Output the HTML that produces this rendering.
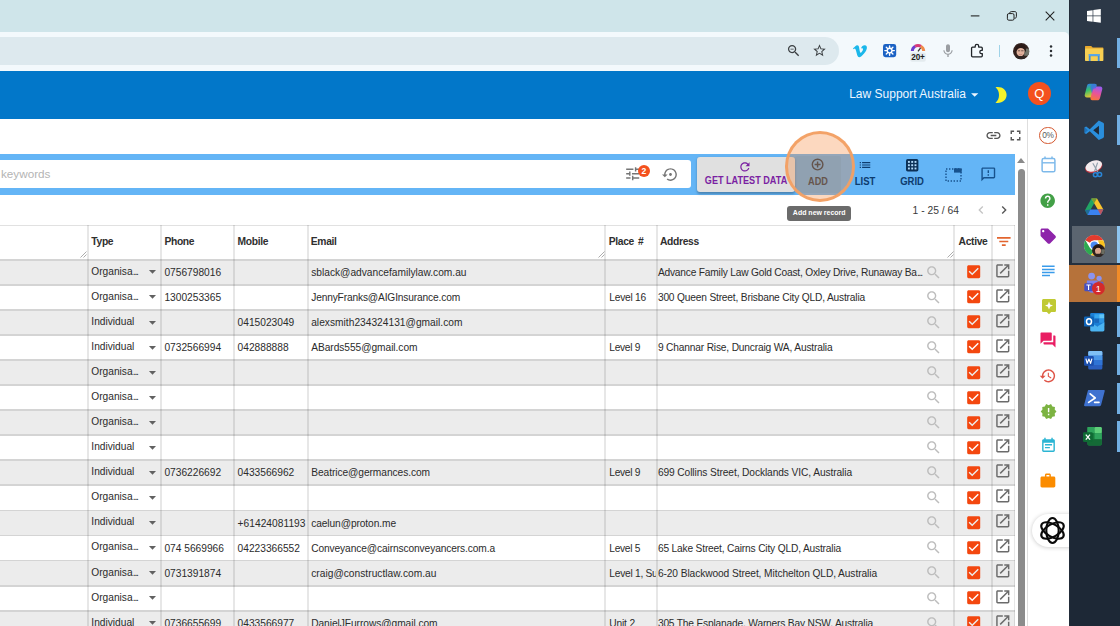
<!DOCTYPE html>
<html lang="en">
<head>
<meta charset="utf-8">
<title>Contacts</title>
<style>
*{box-sizing:border-box;margin:0;padding:0}
html,body{width:1120px;height:626px;overflow:hidden;background:#fff}
body{position:relative;font-family:"Liberation Sans",sans-serif;color:#333}
.abs{position:absolute}
.ic{position:absolute;display:block;overflow:visible}
/* chrome */
#tabstrip{left:0;top:0;width:1069px;height:45px;background:#cfe5ea}
#ctool{left:0;top:32.3px;width:1069px;height:39.2px;background:#f3f9fc;border-top-right-radius:5px}
#pill{left:-30px;top:37px;width:869px;height:28px;border-radius:14px;background:#dde9ee}
/* app header */
#hdr{left:0;top:71px;width:1069px;height:47.8px;background:#0277c9}
#org{left:849.2px;top:86.9px;font-size:12px;line-height:14px;color:#eef6ff;white-space:nowrap}
#avatar{left:1027.9px;top:82.4px;width:22.8px;height:22.8px;border-radius:50%;background:#f4511e;color:#fff;font-size:13px;line-height:23px;text-align:center}
/* toolbar band */
#band{left:0;top:154px;width:1015px;height:40.8px;background:#64b5f6}
#sinput{left:-6px;top:160px;width:696.6px;height:28.2px;background:#fff;border-radius:3px}
#kw{left:1.0px;top:167.3px;font-size:11.7px;line-height:14px;color:#b4b4b4;white-space:nowrap}
#badge{left:637.7px;top:164.8px;width:12.6px;height:12.6px;border-radius:50%;background:#f4511e;color:#fff;font-size:8.6px;font-weight:bold;line-height:12.6px;text-align:center}
#btnget{left:697px;top:156.6px;width:98px;height:35px;background:#e0e0e0;border-radius:3px;box-shadow:0 1.5px 2.5px rgba(0,0,0,.28)}
.blab{position:absolute;font-size:10px;font-weight:bold;line-height:12px;white-space:nowrap;text-align:center;transform:translateX(-50%) scaleX(.95)}
#btnadd{left:795.3px;top:155.6px;width:46px;height:37px;background:rgba(0,0,0,.045);border-radius:2px}
#hl{left:785px;top:131.3px;width:70px;height:70.4px;border-radius:50%;background:rgba(246,138,60,.33);border:3.2px solid rgba(243,160,100,.96)}
#tip{left:786.7px;top:206px;width:64.2px;height:15.2px;border-radius:3px;background:#6b6b6b;color:#fff;font-size:8px;font-weight:bold;line-height:14.6px;text-align:center;white-space:nowrap}
#tip span{display:inline-block;transform:scaleX(.872);transform-origin:50% 50%;margin:0 -8px}
#pg{left:912.6px;top:203.6px;font-size:10.3px;line-height:14px;color:#3a3a3a;white-space:nowrap}
/* table */
#thead{left:0;top:225px;width:1015px;height:34.3px;background:#fff;border-top:1.6px solid #e1e1e1}
.th{position:absolute;top:234.6px;font-size:10.3px;font-weight:bold;line-height:14px;color:#2f2f2f;white-space:nowrap;letter-spacing:-0.33px}
.row{position:absolute;left:0;width:1015px;height:25.1px}
.c{position:absolute;top:6.75px;font-size:10.2px;line-height:13px;color:#2b2b2b;white-space:nowrap}
.c.ty{top:5.2px}
.c.pl{width:46.6px;overflow:hidden}
.e{font-style:normal;letter-spacing:-1.2px;margin-left:0.2px}
.vs{position:absolute;top:225px;width:2px;height:401px;background:rgba(0,0,0,.095)}
.hs{position:absolute;left:0;width:1015px;height:1.8px;background:#d4d4d4}
.rz{position:absolute;top:250.5px;width:7px;height:7px}
/* scrollbar */
#sbthumb{left:1018px;top:168.5px;width:7.2px;height:470px;border-radius:3.6px;background:#8c8c8c}
#sbup{left:1016.6px;top:158.2px;width:0;height:0;border-left:4.5px solid transparent;border-right:4.5px solid transparent;border-bottom:5px solid #8a8a8a}
/* right app sidebar */
#sline{left:1027px;top:118.8px;width:1px;height:508px;background:#dedede}
#pct{left:1039.1px;top:126.7px;width:17.8px;height:17.8px;border-radius:50%;border:1.8px solid #d4562d;font-size:8.3px;line-height:14.4px;text-align:center;color:#5a5a5a;letter-spacing:-0.35px}
#fpill{left:1031.6px;top:513.6px;width:40px;height:33.8px;border-radius:17px 0 0 17px;background:#fff;box-shadow:0 0.5px 4px rgba(0,0,0,.22)}
/* taskbar */
#task{left:1069px;top:0;width:51px;height:626px;background:linear-gradient(to bottom,#2c3847 0,#2c3847 226px,#1d2836 302px,#1d2836 100%);border-left:1.5px solid #222c39}
.ind{position:absolute;left:1117.3px;width:2.7px;background:#72afe3}
#tchrome{left:1071.6px;top:226.2px;width:45.8px;height:37.2px;background:#5b6570}
#tteams{left:1069px;top:264.5px;width:48.3px;height:37px;background:#b6723a}
</style>
</head>
<body>
<!-- ===== Chrome window frame ===== -->
<div id="tabstrip" class="abs"></div>
<div id="ctool" class="abs"></div>
<div id="pill" class="abs"></div>
<!-- window controls -->
<svg class="ic" style="left:969px;top:10px;width:12px;height:12px" viewBox="0 0 12 12"><path d="M1.8 5.9H10.4" stroke="#222" stroke-width="1.1" fill="none"/></svg>
<svg class="ic" style="left:1006.4px;top:10.2px;width:12px;height:12px" viewBox="0 0 12 12"><rect x="1.4" y="3.6" width="6.6" height="6.6" rx="1.4" fill="none" stroke="#222" stroke-width="1"/><path d="M3.8 3.4V3.1c0-.9.6-1.5 1.5-1.5h3.6c.9 0 1.5.6 1.5 1.5v3.6c0 .9-.6 1.5-1.5 1.5h-.5" fill="none" stroke="#222" stroke-width="1"/></svg>
<svg class="ic" style="left:1044.1px;top:10.1px;width:12px;height:12px" viewBox="0 0 12 12"><path d="M1.7 1.7L10.3 10.3M10.3 1.7L1.7 10.3" stroke="#222" stroke-width="1.05" fill="none"/></svg>
<!-- zoom-out magnifier -->
<svg class="ic" style="left:785.6px;top:43.4px;width:15.4px;height:15.4px" viewBox="0 0 24 24"><path fill="#3c4043" d="M15.5 14h-.79l-.28-.27C15.41 12.59 16 11.11 16 9.5 16 5.91 13.09 3 9.5 3S3 5.91 3 9.5 5.91 16 9.5 16c1.61 0 3.09-.59 4.23-1.57l.27.28v.79l5 4.99L20.49 19l-4.99-5zm-6 0C7.01 14 5 11.99 5 9.5S7.01 5 9.5 5 14 7.01 14 9.5 11.99 14 9.5 14zM7 9h5v1H7z"/></svg>
<!-- star -->
<svg class="ic" style="left:812px;top:43.2px;width:15px;height:15px" viewBox="0 0 24 24"><path fill="#3c4043" d="M22 9.24l-7.19-.62L12 2 9.19 8.63 2 9.24l5.46 4.73L5.82 21 12 17.27 18.18 21l-1.63-7.03L22 9.24zM12 15.4l-3.76 2.27 1-4.28-3.32-2.880 4.380-.38L12 6.100l1.710 4.040 4.380.38-3.320 2.880 1 4.280L12 15.400z"/></svg>
<!-- vimeo v -->
<svg class="ic" style="left:853.4px;top:44.6px;width:14px;height:13px" viewBox="0 0 14 13"><path fill="#1ab7ea" d="M13.9 2.9c-.06 1.36-1.01 3.220-2.850 5.580C9.150 10.950 7.540 12.200 6.230 12.200c-.81 0-1.500-.75-2.060-2.250L3.040 5.810C2.620 4.310 2.170 3.560 1.690 3.560c-.1 0-.47.22-1.100.66L0 3.370c.69-.61 1.370-1.210 2.040-1.820C2.960.75 3.650.33 4.110.29 5.200.19 5.870.93 6.120 2.520c.27 1.720.46 2.790.56 3.210.31 1.420.66 2.130 1.030 2.130.29 0 .73-.46 1.310-1.380.58-.92.89-1.620.93-2.100.08-.79-.23-1.190-.93-1.190-.33 0-.67.08-1.020.23C8.680 1.200 9.980.12 11.880.18 13.290.22 13.960 1.130 13.900 2.900z"/></svg>
<!-- blue gear square -->
<svg class="ic" style="left:882.900px;top:44.400px;width:13.200px;height:13.200px" viewBox="0 0 14 14"><rect width="14" height="14" rx="2.600" fill="#1b62c4"/><path d="M7 2v10M2 7h10M3.500 3.500l7 7M3.500 10.500l7-7" stroke="#fff" stroke-width="1.500" stroke-linecap="round"/><circle cx="7" cy="7" r="3.200" fill="#fff"/><circle cx="7" cy="7" r="1.700" fill="#1b62c4"/></svg>
<!-- rainbow arc + 20+ -->
<svg class="ic" style="left:909.300px;top:41.600px;width:18px;height:21px" viewBox="0 0 18 21"><path d="M3.300 9A5.800 5.800 0 0 1 6.200 4.200" stroke="#6a3fd0" stroke-width="3" fill="none"/><path d="M6 4.300A5.800 5.800 0 0 1 12 4.300" stroke="#d83a78" stroke-width="3" fill="none"/><path d="M11.800 4.200A5.800 5.800 0 0 1 14.700 9" stroke="#ef8a4a" stroke-width="3" fill="none"/><path d="M9 9.400L11.600 5.800" stroke="#333" stroke-width="1.200"/><rect x="1.200" y="10.400" width="15.600" height="9.400" rx="2" fill="#e4ebee"/><text x="9" y="18.100" font-family="Liberation Sans, sans-serif" font-size="8.200" font-weight="bold" fill="#1c1c1c" text-anchor="middle" letter-spacing="-0.200">20+</text></svg>
<!-- mic -->
<svg class="ic" style="left:940.2px;top:43px;width:16px;height:16px" viewBox="0 0 24 24"><path fill="#9a9ea2" d="M12 14c1.660 0 2.990-1.340 2.990-3L15 5c0-1.660-1.340-3-3-3S9 3.340 9 5v6c0 1.660 1.340 3 3 3zm5.300-3c0 3-2.540 5.100-5.300 5.100S6.700 14 6.700 11H5c0 3.410 2.720 6.230 6 6.720V21h2v-3.280c3.280-.48 6-3.300 6-6.720h-1.700z"/></svg>
<!-- extensions puzzle -->
<svg class="ic" style="left:970.400px;top:42px;width:15.400px;height:16.300px" viewBox="0 0 16 17"><path d="M2.700 5.300h2.700v-1a1.800 1.800 0 0 1 3.600 0v1h2.700a1.100 1.100 0 0 1 1.100 1.100v2.300h-.9a1.700 1.700 0 0 0 0 3.400h.9v2.300a1.100 1.100 0 0 1-1.100 1.100H2.700a1.100 1.100 0 0 1-1.100-1.100V6.400a1.100 1.100 0 0 1 1.100-1.100z" fill="none" stroke="#202428" stroke-width="1.350" stroke-linejoin="round"/></svg>
<!-- separator -->
<div class="abs" style="left:998.9px;top:44.6px;width:1.3px;height:12.800px;background:#9fd3e8"></div>
<!-- profile avatar photo (approximation) -->
<svg class="ic" style="left:1013.400px;top:43px;width:16.400px;height:16.400px" viewBox="0 0 16 16"><defs><clipPath id="avc"><circle cx="8" cy="8" r="8"/></clipPath></defs><g clip-path="url(#avc)"><rect width="16" height="16" fill="#33221d"/><rect x="11" y="5.500" width="5" height="7" fill="#6f7368"/><ellipse cx="7.300" cy="8.300" rx="3.900" ry="4.800" fill="#e0b29c"/><path d="M2.300 10.500C1.500 4 4.600 1 8 1.200c3.600.2 5.400 3.200 4.500 8.400-.5-3-1.700-4.500-4.600-4.800C5.300 4.600 3.500 6.500 2.300 10.500z" fill="#2a1a16"/><path d="M4.700 7.600h2.300M8 7.600h2.300" stroke="#5a4138" stroke-width=".8"/><path d="M5.800 10.800c1 .8 2.200.8 3.200 0" stroke="#b5736a" stroke-width=".7" fill="none"/><path d="M1.500 16c.6-2.600 2.600-3.400 5.800-3.400s5.200.8 5.800 3.400z" fill="#2c2522"/></g></svg>
<!-- 3 dots -->
<svg class="ic" style="left:1046.6px;top:43.4px;width:8px;height:16px" viewBox="0 0 8 16"><circle cx="4" cy="3.500" r="1.250" fill="#2b2f33"/><circle cx="4" cy="8" r="1.250" fill="#2b2f33"/><circle cx="4" cy="12.500" r="1.250" fill="#2b2f33"/></svg>


<!-- ===== App header ===== -->
<div id="hdr" class="abs"></div>
<div id="org" class="abs">Law Support Australia</div>
<svg class="ic" style="left:966.4px;top:85.6px;width:17.4px;height:17.4px" viewBox="0 0 24 24"><path fill="#eef6ff" d="M7 10l5 5 5-5z"/></svg>
<svg class="ic" style="left:994.4px;top:86.5px;width:13px;height:16px" viewBox="0 0 13 16"><path fill="#f3f32a" d="M1.500.3C8-.8 12.600 3 12.600 8S8 16.800 1.500 15.700C4 13.600 5 11 5 8S4 2.400 1.500.3z"/></svg>
<div id="avatar" class="abs">Q</div>

<!-- ===== link / fullscreen ===== -->
<svg class="ic" style="left:985.3px;top:127.3px;width:17px;height:17px" viewBox="0 0 24 24"><path fill="#555" d="M3.9 12c0-1.71 1.39-3.1 3.1-3.1h4V7H7c-2.76 0-5 2.24-5 5s2.24 5 5 5h4v-1.9H7c-1.71 0-3.1-1.39-3.1-3.1zM8 13h8v-2H8v2zm9-6h-4v1.9h4c1.71 0 3.1 1.39 3.1 3.1s-1.39 3.1-3.1 3.1h-4V17h4c2.76 0 5-2.24 5-5s-2.24-5-5-5z"/></svg>
<svg class="ic" style="left:1007.1px;top:127.3px;width:17px;height:17px" viewBox="0 0 24 24"><path fill="#555" d="M7 14H5v5h5v-2H7v-3zm-2-4h2V7h3V5H5v5zm12 7h-3v2h5v-5h-2v3zM14 5v2h3v3h2V5h-5z"/></svg>

<!-- ===== Toolbar band ===== -->
<div id="band" class="abs"></div>
<div id="sinput" class="abs"></div>
<div id="kw" class="abs">keywords</div>
<svg class="ic" style="left:623.5px;top:165.3px;width:17.4px;height:17.4px" viewBox="0 0 24 24"><path fill="#757575" d="M3 17v2h6v-2H3zM3 5v2h10V5H3zm10 16v-2h8v-2h-8v-2h-2v6h2zM7 9v2H3v2h4v2h2V9H7zm14 4v-2H11v2h10zm-6-4h2V7h4V5h-4V3h-2v6z"/></svg>
<div id="badge" class="abs">2</div>
<svg class="ic" style="left:661.7px;top:165.7px;width:17px;height:17px" viewBox="0 0 24 24"><path fill="#757575" d="M14 12c0-1.1-.9-2-2-2s-2 .9-2 2 .9 2 2 2 2-.9 2-2zm-2-9c-4.970 0-9 4.030-9 9H0l4 4 4-4H5c0-3.870 3.130-7 7-7s7 3.130 7 7-3.130 7-7 7c-1.510 0-2.910-.49-4.060-1.300l-1.420 1.440C8.040 20.300 9.940 21 12 21c4.970 0 9-4.030 9-9s-4.030-9-9-9z"/></svg>

<div id="btnget" class="abs"></div>
<svg class="ic" style="left:737.9px;top:159.7px;width:13.8px;height:13.8px" viewBox="0 0 24 24"><path fill="#7b1fa2" d="M17.65 6.35C16.2 4.9 14.21 4 12 4c-4.42 0-7.99 3.58-7.99 8s3.57 8 7.990 8c3.730 0 6.840-2.550 7.730-6h-2.080c-.82 2.330-3.040 4-5.650 4-3.310 0-6-2.690-6-6s2.690-6 6-6c1.660 0 3.140.69 4.220 1.780L13 11h7V4l-2.350 2.350z"/></svg>
<div class="blab" style="left:745.8px;top:175.2px;color:#7b1fa2;transform:translateX(-50%) scaleX(.91)">GET LATEST DATA</div>

<div id="btnadd" class="abs"></div>
<svg class="ic" style="left:811.2px;top:158.4px;width:13.2px;height:13.2px" viewBox="0 0 13.200 13.200"><circle cx="6.600" cy="6.600" r="5.300" fill="none" stroke="#1e3c55" stroke-width="1.450"/><path d="M6.600 3.600V9.600M3.600 6.600H9.600" stroke="#1e3c55" stroke-width="1.450" fill="none"/></svg>
<div class="blab" style="left:818.3px;top:175.6px;color:#1e3c55;transform:translateX(-50%) scaleX(.92)">ADD</div>

<svg class="ic" style="left:857.9px;top:158.3px;width:14px;height:14px" viewBox="0 0 24 24"><path fill="#0d3c6e" d="M3 13h2v-2H3v2zm0 4h2v-2H3v2zm0-8h2V7H3v2zm4 4h14v-2H7v2zm0 4h14v-2H7v2zM7 7v2h14V7H7z"/></svg>
<div class="blab" style="left:865.1px;top:175.9px;color:#0d3c6e">LIST</div>

<svg class="ic" style="left:906.1px;top:158.9px;width:12.4px;height:12.4px" viewBox="0 0 12.400 12.400"><rect width="12.400" height="12.400" rx="1.700" fill="#0c3157"/><g fill="#b3dbfa"><rect x="1.95" y="1.95" width="1.900" height="1.900"/><rect x="5.25" y="1.95" width="1.900" height="1.900"/><rect x="8.55" y="1.95" width="1.900" height="1.900"/><rect x="1.95" y="5.25" width="1.900" height="1.900"/><rect x="5.25" y="5.25" width="1.900" height="1.900"/><rect x="8.55" y="5.25" width="1.900" height="1.900"/><rect x="1.95" y="8.55" width="1.900" height="1.900"/><rect x="5.25" y="8.55" width="1.900" height="1.900"/><rect x="8.55" y="8.55" width="1.900" height="1.900"/></g></svg>
<div class="blab" style="left:912.1px;top:175.9px;color:#0d3c6e">GRID</div>

<!-- pivot icon -->
<svg class="ic" style="left:944.9px;top:167.6px;width:17px;height:14px" viewBox="0 0 17 14"><rect x="1" y="1" width="15" height="12" fill="none" stroke="#17528d" stroke-width="1.4" stroke-dasharray="1.4 1.6"/><rect x="9" y="0.300" width="7.700" height="4.300" fill="#17528d"/></svg>
<!-- feedback icon -->
<svg class="ic" style="left:979.7px;top:165.6px;width:16.6px;height:16.6px" viewBox="0 0 24 24"><path fill="#17528d" d="M20 2H4c-1.100 0-1.990.9-1.990 2L2 22l4-4h14c1.100 0 2-.9 2-2V4c0-1.100-.9-2-2-2zm0 14H5.170l-.59.59-.58.58V4h16v12zm-9-4h2v2h-2zm0-6h2v4h-2z"/></svg>

<!-- ===== pagination ===== -->
<div id="pg" class="abs">1 - 25 / 64</div>
<svg class="ic" style="left:973.2px;top:202.3px;width:16px;height:16px" viewBox="0 0 24 24"><path fill="#c4c4c4" d="M15.41 7.41L14 6l-6 6 6 6 1.41-1.41L10.83 12z"/></svg>
<svg class="ic" style="left:995.9px;top:202.3px;width:16px;height:16px" viewBox="0 0 24 24"><path fill="#555" d="M10 6L8.590 7.410 13.170 12l-4.580 4.590L10 18l6-6z"/></svg>

<!-- ===== table ===== -->
<div id="thead" class="abs"></div>
<div class="th" style="left:91.3px">Type</div>
<div class="th" style="left:164.4px">Phone</div>
<div class="th" style="left:237.5px">Mobile</div>
<div class="th" style="left:310.8px">Email</div>
<div class="th" style="left:608.7px;word-spacing:1.6px">Place #</div>
<div class="th" style="left:660px">Address</div>
<div class="th" style="left:958.6px">Active</div>
<svg class="ic" style="left:996.6px;top:235.600px;width:13.600px;height:11px" viewBox="0 0 13.600 11"><path d="M0 1.900H13.600M2.300 5.500H11.300M4.900 9.100H8.700" stroke="#e2652f" stroke-width="1.700" fill="none"/></svg>
<div class="row" style="top:259.70px;background:#ececec">
<span class="c ty" style="left:91.3px;top:5.30px">Organisa<i class=e>...</i></span>
<span class="c" style="left:164.4px;top:6.30px">0756798016</span>
<span class="c" style="left:311.2px;top:6.30px">sblack@advancefamilylaw.com.au</span>
<span class="c" style="left:657.9px;top:6.30px;letter-spacing:-0.197px">Advance Family Law Gold Coast, Oxley Drive, Runaway Ba<i class=e>...</i></span>
</div>
<svg class="ic" style="left:144.00px;top:263.38px;width:17px;height:17px;" viewBox="0 0 24 24"><path fill="#616161" d="M7 10l5 5 5-5z"/></svg>
<svg class="ic" style="left:924.70px;top:263.63px;width:17px;height:17px;" viewBox="0 0 24 24"><path fill="#bdbdbd" d="M15.5 14h-.79l-.28-.27C15.41 12.59 16 11.11 16 9.5 16 5.91 13.09 3 9.5 3S3 5.91 3 9.5 5.91 16 9.5 16c1.61 0 3.09-.59 4.23-1.57l.27.28v.79l5 4.99L20.49 19l-4.99-5zm-6 0C7.01 14 5 11.99 5 9.5S7.01 5 9.5 5 14 7.01 14 9.5 11.99 14 9.5 14z"/></svg>
<svg class="ic" style="left:964.80px;top:263.24px;width:17.4px;height:17.4px;" viewBox="0 0 24 24"><path fill="#f3470f" d="M19 3H5c-1.11 0-2 .9-2 2v14c0 1.1.89 2 2 2h14c1.11 0 2-.9 2-2V5c0-1.1-.89-2-2-2zm-9 14l-5-5 1.41-1.41L10 14.17l7.59-7.59L19 8l-9 9z"/></svg>
<svg class="ic" style="left:993.90px;top:261.63px;width:17.6px;height:17.6px;" viewBox="0 0 24 24"><path fill="#6b6b6b" d="M19 19H5V5h7V3H5c-1.11 0-2 .9-2 2v14c0 1.1.89 2 2 2h14c1.1 0 2-.9 2-2v-7h-2v7zM14 3v2h3.59l-9.83 9.83 1.41 1.41L19 6.41V10h2V3h-7z"/></svg>
<div class="row" style="top:284.77px;background:#ffffff">
<span class="c ty" style="left:91.3px;top:5.23px">Organisa<i class=e>...</i></span>
<span class="c" style="left:164.4px;top:6.23px">1300253365</span>
<span class="c" style="left:311.2px;top:6.23px;letter-spacing:-0.151px">JennyFranks@AIGInsurance.com</span>
<span class="c pl" style="left:609.3px;top:6.23px;letter-spacing:-0.229px">Level 16</span>
<span class="c" style="left:657.9px;top:6.23px;letter-spacing:-0.176px">300 Queen Street, Brisbane City QLD, Australia</span>
</div>
<svg class="ic" style="left:144.00px;top:288.45px;width:17px;height:17px;" viewBox="0 0 24 24"><path fill="#616161" d="M7 10l5 5 5-5z"/></svg>
<svg class="ic" style="left:924.70px;top:288.70px;width:17px;height:17px;" viewBox="0 0 24 24"><path fill="#bdbdbd" d="M15.5 14h-.79l-.28-.27C15.41 12.59 16 11.11 16 9.5 16 5.91 13.09 3 9.5 3S3 5.91 3 9.5 5.91 16 9.5 16c1.61 0 3.09-.59 4.23-1.57l.27.28v.79l5 4.99L20.49 19l-4.99-5zm-6 0C7.01 14 5 11.99 5 9.5S7.01 5 9.5 5 14 7.01 14 9.5 11.99 14 9.5 14z"/></svg>
<svg class="ic" style="left:964.80px;top:288.31px;width:17.4px;height:17.4px;" viewBox="0 0 24 24"><path fill="#f3470f" d="M19 3H5c-1.11 0-2 .9-2 2v14c0 1.1.89 2 2 2h14c1.11 0 2-.9 2-2V5c0-1.1-.89-2-2-2zm-9 14l-5-5 1.41-1.41L10 14.17l7.59-7.59L19 8l-9 9z"/></svg>
<svg class="ic" style="left:993.90px;top:286.70px;width:17.6px;height:17.6px;" viewBox="0 0 24 24"><path fill="#6b6b6b" d="M19 19H5V5h7V3H5c-1.11 0-2 .9-2 2v14c0 1.1.89 2 2 2h14c1.1 0 2-.9 2-2v-7h-2v7zM14 3v2h3.59l-9.83 9.83 1.41 1.41L19 6.41V10h2V3h-7z"/></svg>
<div class="row" style="top:309.84px;background:#ececec">
<span class="c ty" style="left:91.3px;top:5.16px">Individual</span>
<span class="c" style="left:237.6px;top:6.16px">0415023049</span>
<span class="c" style="left:311.2px;top:6.16px;letter-spacing:0.018px">alexsmith234324131@gmail.com</span>
</div>
<svg class="ic" style="left:144.00px;top:313.52px;width:17px;height:17px;" viewBox="0 0 24 24"><path fill="#616161" d="M7 10l5 5 5-5z"/></svg>
<svg class="ic" style="left:924.70px;top:313.77px;width:17px;height:17px;" viewBox="0 0 24 24"><path fill="#bdbdbd" d="M15.5 14h-.79l-.28-.27C15.41 12.59 16 11.11 16 9.5 16 5.91 13.09 3 9.5 3S3 5.91 3 9.5 5.91 16 9.5 16c1.61 0 3.09-.59 4.23-1.57l.27.28v.79l5 4.99L20.49 19l-4.99-5zm-6 0C7.01 14 5 11.99 5 9.5S7.01 5 9.5 5 14 7.01 14 9.5 11.99 14 9.5 14z"/></svg>
<svg class="ic" style="left:964.80px;top:313.38px;width:17.4px;height:17.4px;" viewBox="0 0 24 24"><path fill="#f3470f" d="M19 3H5c-1.11 0-2 .9-2 2v14c0 1.1.89 2 2 2h14c1.11 0 2-.9 2-2V5c0-1.1-.89-2-2-2zm-9 14l-5-5 1.41-1.41L10 14.17l7.59-7.59L19 8l-9 9z"/></svg>
<svg class="ic" style="left:993.90px;top:311.77px;width:17.6px;height:17.6px;" viewBox="0 0 24 24"><path fill="#6b6b6b" d="M19 19H5V5h7V3H5c-1.11 0-2 .9-2 2v14c0 1.1.89 2 2 2h14c1.1 0 2-.9 2-2v-7h-2v7zM14 3v2h3.59l-9.83 9.83 1.41 1.41L19 6.41V10h2V3h-7z"/></svg>
<div class="row" style="top:334.91px;background:#ffffff">
<span class="c ty" style="left:91.3px;top:5.09px">Individual</span>
<span class="c" style="left:164.4px;top:6.09px">0732566994</span>
<span class="c" style="left:237.6px;top:6.09px">042888888</span>
<span class="c" style="left:311.2px;top:6.09px;letter-spacing:-0.046px">ABards555@gmail.com</span>
<span class="c pl" style="left:609.3px;top:6.09px;letter-spacing:-0.308px">Level 9</span>
<span class="c" style="left:657.9px;top:6.09px;letter-spacing:-0.166px">9 Channar Rise, Duncraig WA, Australia</span>
</div>
<svg class="ic" style="left:144.00px;top:338.59px;width:17px;height:17px;" viewBox="0 0 24 24"><path fill="#616161" d="M7 10l5 5 5-5z"/></svg>
<svg class="ic" style="left:924.70px;top:338.84px;width:17px;height:17px;" viewBox="0 0 24 24"><path fill="#bdbdbd" d="M15.5 14h-.79l-.28-.27C15.41 12.59 16 11.11 16 9.5 16 5.91 13.09 3 9.5 3S3 5.91 3 9.5 5.91 16 9.5 16c1.61 0 3.09-.59 4.23-1.57l.27.28v.79l5 4.99L20.49 19l-4.99-5zm-6 0C7.01 14 5 11.99 5 9.5S7.01 5 9.5 5 14 7.01 14 9.5 11.99 14 9.5 14z"/></svg>
<svg class="ic" style="left:964.80px;top:338.44px;width:17.4px;height:17.4px;" viewBox="0 0 24 24"><path fill="#f3470f" d="M19 3H5c-1.11 0-2 .9-2 2v14c0 1.1.89 2 2 2h14c1.11 0 2-.9 2-2V5c0-1.1-.89-2-2-2zm-9 14l-5-5 1.41-1.41L10 14.17l7.59-7.59L19 8l-9 9z"/></svg>
<svg class="ic" style="left:993.90px;top:336.84px;width:17.6px;height:17.6px;" viewBox="0 0 24 24"><path fill="#6b6b6b" d="M19 19H5V5h7V3H5c-1.11 0-2 .9-2 2v14c0 1.1.89 2 2 2h14c1.1 0 2-.9 2-2v-7h-2v7zM14 3v2h3.59l-9.83 9.83 1.41 1.41L19 6.41V10h2V3h-7z"/></svg>
<div class="row" style="top:359.98px;background:#ececec">
<span class="c ty" style="left:91.3px;top:5.02px">Organisa<i class=e>...</i></span>
</div>
<svg class="ic" style="left:144.00px;top:363.67px;width:17px;height:17px;" viewBox="0 0 24 24"><path fill="#616161" d="M7 10l5 5 5-5z"/></svg>
<svg class="ic" style="left:924.70px;top:363.92px;width:17px;height:17px;" viewBox="0 0 24 24"><path fill="#bdbdbd" d="M15.5 14h-.79l-.28-.27C15.41 12.59 16 11.11 16 9.5 16 5.91 13.09 3 9.5 3S3 5.91 3 9.5 5.91 16 9.5 16c1.61 0 3.09-.59 4.23-1.57l.27.28v.79l5 4.99L20.49 19l-4.99-5zm-6 0C7.01 14 5 11.99 5 9.5S7.01 5 9.5 5 14 7.01 14 9.5 11.99 14 9.5 14z"/></svg>
<svg class="ic" style="left:964.80px;top:363.52px;width:17.4px;height:17.4px;" viewBox="0 0 24 24"><path fill="#f3470f" d="M19 3H5c-1.11 0-2 .9-2 2v14c0 1.1.89 2 2 2h14c1.11 0 2-.9 2-2V5c0-1.1-.89-2-2-2zm-9 14l-5-5 1.41-1.41L10 14.17l7.59-7.59L19 8l-9 9z"/></svg>
<svg class="ic" style="left:993.90px;top:361.92px;width:17.6px;height:17.6px;" viewBox="0 0 24 24"><path fill="#6b6b6b" d="M19 19H5V5h7V3H5c-1.11 0-2 .9-2 2v14c0 1.1.89 2 2 2h14c1.1 0 2-.9 2-2v-7h-2v7zM14 3v2h3.59l-9.83 9.83 1.41 1.41L19 6.41V10h2V3h-7z"/></svg>
<div class="row" style="top:385.05px;background:#ffffff">
<span class="c ty" style="left:91.3px;top:4.95px">Organisa<i class=e>...</i></span>
</div>
<svg class="ic" style="left:144.00px;top:388.73px;width:17px;height:17px;" viewBox="0 0 24 24"><path fill="#616161" d="M7 10l5 5 5-5z"/></svg>
<svg class="ic" style="left:924.70px;top:388.98px;width:17px;height:17px;" viewBox="0 0 24 24"><path fill="#bdbdbd" d="M15.5 14h-.79l-.28-.27C15.41 12.59 16 11.11 16 9.5 16 5.91 13.09 3 9.5 3S3 5.91 3 9.5 5.91 16 9.5 16c1.61 0 3.09-.59 4.23-1.57l.27.28v.79l5 4.99L20.49 19l-4.99-5zm-6 0C7.01 14 5 11.99 5 9.5S7.01 5 9.5 5 14 7.01 14 9.5 11.99 14 9.5 14z"/></svg>
<svg class="ic" style="left:964.80px;top:388.58px;width:17.4px;height:17.4px;" viewBox="0 0 24 24"><path fill="#f3470f" d="M19 3H5c-1.11 0-2 .9-2 2v14c0 1.1.89 2 2 2h14c1.11 0 2-.9 2-2V5c0-1.1-.89-2-2-2zm-9 14l-5-5 1.41-1.41L10 14.17l7.59-7.59L19 8l-9 9z"/></svg>
<svg class="ic" style="left:993.90px;top:386.98px;width:17.6px;height:17.6px;" viewBox="0 0 24 24"><path fill="#6b6b6b" d="M19 19H5V5h7V3H5c-1.11 0-2 .9-2 2v14c0 1.1.89 2 2 2h14c1.1 0 2-.9 2-2v-7h-2v7zM14 3v2h3.59l-9.83 9.83 1.41 1.41L19 6.41V10h2V3h-7z"/></svg>
<div class="row" style="top:410.12px;background:#ececec">
<span class="c ty" style="left:91.3px;top:4.88px">Organisa<i class=e>...</i></span>
</div>
<svg class="ic" style="left:144.00px;top:413.81px;width:17px;height:17px;" viewBox="0 0 24 24"><path fill="#616161" d="M7 10l5 5 5-5z"/></svg>
<svg class="ic" style="left:924.70px;top:414.06px;width:17px;height:17px;" viewBox="0 0 24 24"><path fill="#bdbdbd" d="M15.5 14h-.79l-.28-.27C15.41 12.59 16 11.11 16 9.5 16 5.91 13.09 3 9.5 3S3 5.91 3 9.5 5.91 16 9.5 16c1.61 0 3.09-.59 4.23-1.57l.27.28v.79l5 4.99L20.49 19l-4.99-5zm-6 0C7.01 14 5 11.99 5 9.5S7.01 5 9.5 5 14 7.01 14 9.5 11.99 14 9.5 14z"/></svg>
<svg class="ic" style="left:964.80px;top:413.66px;width:17.4px;height:17.4px;" viewBox="0 0 24 24"><path fill="#f3470f" d="M19 3H5c-1.11 0-2 .9-2 2v14c0 1.1.89 2 2 2h14c1.11 0 2-.9 2-2V5c0-1.1-.89-2-2-2zm-9 14l-5-5 1.41-1.41L10 14.17l7.59-7.59L19 8l-9 9z"/></svg>
<svg class="ic" style="left:993.90px;top:412.06px;width:17.6px;height:17.6px;" viewBox="0 0 24 24"><path fill="#6b6b6b" d="M19 19H5V5h7V3H5c-1.11 0-2 .9-2 2v14c0 1.1.89 2 2 2h14c1.1 0 2-.9 2-2v-7h-2v7zM14 3v2h3.59l-9.83 9.83 1.41 1.41L19 6.41V10h2V3h-7z"/></svg>
<div class="row" style="top:435.19px;background:#ffffff">
<span class="c ty" style="left:91.3px;top:4.81px">Individual</span>
</div>
<svg class="ic" style="left:144.00px;top:438.88px;width:17px;height:17px;" viewBox="0 0 24 24"><path fill="#616161" d="M7 10l5 5 5-5z"/></svg>
<svg class="ic" style="left:924.70px;top:439.12px;width:17px;height:17px;" viewBox="0 0 24 24"><path fill="#bdbdbd" d="M15.5 14h-.79l-.28-.27C15.41 12.59 16 11.11 16 9.5 16 5.91 13.09 3 9.5 3S3 5.91 3 9.5 5.91 16 9.5 16c1.61 0 3.09-.59 4.23-1.57l.27.28v.79l5 4.99L20.49 19l-4.99-5zm-6 0C7.01 14 5 11.99 5 9.5S7.01 5 9.5 5 14 7.01 14 9.5 11.99 14 9.5 14z"/></svg>
<svg class="ic" style="left:964.80px;top:438.73px;width:17.4px;height:17.4px;" viewBox="0 0 24 24"><path fill="#f3470f" d="M19 3H5c-1.11 0-2 .9-2 2v14c0 1.1.89 2 2 2h14c1.11 0 2-.9 2-2V5c0-1.1-.89-2-2-2zm-9 14l-5-5 1.41-1.41L10 14.17l7.59-7.59L19 8l-9 9z"/></svg>
<svg class="ic" style="left:993.90px;top:437.12px;width:17.6px;height:17.6px;" viewBox="0 0 24 24"><path fill="#6b6b6b" d="M19 19H5V5h7V3H5c-1.11 0-2 .9-2 2v14c0 1.1.89 2 2 2h14c1.1 0 2-.9 2-2v-7h-2v7zM14 3v2h3.59l-9.83 9.83 1.41 1.41L19 6.41V10h2V3h-7z"/></svg>
<div class="row" style="top:460.26px;background:#ececec">
<span class="c ty" style="left:91.3px;top:4.74px">Individual</span>
<span class="c" style="left:164.4px;top:5.74px">0736226692</span>
<span class="c" style="left:237.6px;top:5.74px">0433566962</span>
<span class="c" style="left:311.2px;top:5.74px;letter-spacing:-0.063px">Beatrice@germances.com</span>
<span class="c pl" style="left:609.3px;top:5.74px;letter-spacing:-0.308px">Level 9</span>
<span class="c" style="left:657.9px;top:5.74px;letter-spacing:-0.093px">699 Collins Street, Docklands VIC, Australia</span>
</div>
<svg class="ic" style="left:144.00px;top:463.94px;width:17px;height:17px;" viewBox="0 0 24 24"><path fill="#616161" d="M7 10l5 5 5-5z"/></svg>
<svg class="ic" style="left:924.70px;top:464.19px;width:17px;height:17px;" viewBox="0 0 24 24"><path fill="#bdbdbd" d="M15.5 14h-.79l-.28-.27C15.41 12.59 16 11.11 16 9.5 16 5.91 13.09 3 9.5 3S3 5.91 3 9.5 5.91 16 9.5 16c1.61 0 3.09-.59 4.23-1.57l.27.28v.79l5 4.99L20.49 19l-4.99-5zm-6 0C7.01 14 5 11.99 5 9.5S7.01 5 9.5 5 14 7.01 14 9.5 11.99 14 9.5 14z"/></svg>
<svg class="ic" style="left:964.80px;top:463.80px;width:17.4px;height:17.4px;" viewBox="0 0 24 24"><path fill="#f3470f" d="M19 3H5c-1.11 0-2 .9-2 2v14c0 1.1.89 2 2 2h14c1.11 0 2-.9 2-2V5c0-1.1-.89-2-2-2zm-9 14l-5-5 1.41-1.41L10 14.17l7.59-7.59L19 8l-9 9z"/></svg>
<svg class="ic" style="left:993.90px;top:462.19px;width:17.6px;height:17.6px;" viewBox="0 0 24 24"><path fill="#6b6b6b" d="M19 19H5V5h7V3H5c-1.11 0-2 .9-2 2v14c0 1.1.89 2 2 2h14c1.1 0 2-.9 2-2v-7h-2v7zM14 3v2h3.59l-9.83 9.83 1.41 1.41L19 6.41V10h2V3h-7z"/></svg>
<div class="row" style="top:485.33px;background:#ffffff">
<span class="c ty" style="left:91.3px;top:4.67px">Organisa<i class=e>...</i></span>
</div>
<svg class="ic" style="left:144.00px;top:489.01px;width:17px;height:17px;" viewBox="0 0 24 24"><path fill="#616161" d="M7 10l5 5 5-5z"/></svg>
<svg class="ic" style="left:924.70px;top:489.26px;width:17px;height:17px;" viewBox="0 0 24 24"><path fill="#bdbdbd" d="M15.5 14h-.79l-.28-.27C15.41 12.59 16 11.11 16 9.5 16 5.91 13.09 3 9.5 3S3 5.91 3 9.5 5.91 16 9.5 16c1.61 0 3.09-.59 4.23-1.57l.27.28v.79l5 4.99L20.49 19l-4.99-5zm-6 0C7.01 14 5 11.99 5 9.5S7.01 5 9.5 5 14 7.01 14 9.5 11.99 14 9.5 14z"/></svg>
<svg class="ic" style="left:964.80px;top:488.87px;width:17.4px;height:17.4px;" viewBox="0 0 24 24"><path fill="#f3470f" d="M19 3H5c-1.11 0-2 .9-2 2v14c0 1.1.89 2 2 2h14c1.11 0 2-.9 2-2V5c0-1.1-.89-2-2-2zm-9 14l-5-5 1.41-1.41L10 14.17l7.59-7.59L19 8l-9 9z"/></svg>
<svg class="ic" style="left:993.90px;top:487.26px;width:17.6px;height:17.6px;" viewBox="0 0 24 24"><path fill="#6b6b6b" d="M19 19H5V5h7V3H5c-1.11 0-2 .9-2 2v14c0 1.1.89 2 2 2h14c1.1 0 2-.9 2-2v-7h-2v7zM14 3v2h3.59l-9.83 9.83 1.41 1.41L19 6.41V10h2V3h-7z"/></svg>
<div class="row" style="top:510.40px;background:#ececec">
<span class="c ty" style="left:91.3px;top:4.60px">Individual</span>
<span class="c" style="left:237.6px;top:6.60px;letter-spacing:0.031px">+61424081193</span>
<span class="c" style="left:311.2px;top:6.60px;letter-spacing:-0.09px">caelun@proton.me</span>
</div>
<svg class="ic" style="left:144.00px;top:514.09px;width:17px;height:17px;" viewBox="0 0 24 24"><path fill="#616161" d="M7 10l5 5 5-5z"/></svg>
<svg class="ic" style="left:924.70px;top:514.34px;width:17px;height:17px;" viewBox="0 0 24 24"><path fill="#bdbdbd" d="M15.5 14h-.79l-.28-.27C15.41 12.59 16 11.11 16 9.5 16 5.91 13.09 3 9.5 3S3 5.91 3 9.5 5.91 16 9.5 16c1.61 0 3.09-.59 4.23-1.57l.27.28v.79l5 4.99L20.49 19l-4.99-5zm-6 0C7.01 14 5 11.99 5 9.5S7.01 5 9.5 5 14 7.01 14 9.5 11.99 14 9.5 14z"/></svg>
<svg class="ic" style="left:964.80px;top:513.93px;width:17.4px;height:17.4px;" viewBox="0 0 24 24"><path fill="#f3470f" d="M19 3H5c-1.11 0-2 .9-2 2v14c0 1.1.89 2 2 2h14c1.11 0 2-.9 2-2V5c0-1.1-.89-2-2-2zm-9 14l-5-5 1.41-1.41L10 14.17l7.59-7.59L19 8l-9 9z"/></svg>
<svg class="ic" style="left:993.90px;top:512.34px;width:17.6px;height:17.6px;" viewBox="0 0 24 24"><path fill="#6b6b6b" d="M19 19H5V5h7V3H5c-1.11 0-2 .9-2 2v14c0 1.1.89 2 2 2h14c1.1 0 2-.9 2-2v-7h-2v7zM14 3v2h3.59l-9.83 9.83 1.41 1.41L19 6.41V10h2V3h-7z"/></svg>
<div class="row" style="top:535.47px;background:#ffffff">
<span class="c ty" style="left:91.3px;top:4.53px">Organisa<i class=e>...</i></span>
<span class="c" style="left:164.4px;top:6.53px">074 5669966</span>
<span class="c" style="left:237.6px;top:6.53px">04223366552</span>
<span class="c" style="left:311.2px;top:6.53px;letter-spacing:-0.108px">Conveyance@cairnsconveyancers.com.a</span>
<span class="c pl" style="left:609.3px;top:6.53px;letter-spacing:-0.308px">Level 5</span>
<span class="c" style="left:657.9px;top:6.53px;letter-spacing:-0.17px">65 Lake Street, Cairns City QLD, Australia</span>
</div>
<svg class="ic" style="left:144.00px;top:539.16px;width:17px;height:17px;" viewBox="0 0 24 24"><path fill="#616161" d="M7 10l5 5 5-5z"/></svg>
<svg class="ic" style="left:924.70px;top:539.41px;width:17px;height:17px;" viewBox="0 0 24 24"><path fill="#bdbdbd" d="M15.5 14h-.79l-.28-.27C15.41 12.59 16 11.11 16 9.5 16 5.91 13.09 3 9.5 3S3 5.91 3 9.5 5.91 16 9.5 16c1.61 0 3.09-.59 4.23-1.57l.27.28v.79l5 4.99L20.49 19l-4.99-5zm-6 0C7.01 14 5 11.99 5 9.5S7.01 5 9.5 5 14 7.01 14 9.5 11.99 14 9.5 14z"/></svg>
<svg class="ic" style="left:964.80px;top:539.00px;width:17.4px;height:17.4px;" viewBox="0 0 24 24"><path fill="#f3470f" d="M19 3H5c-1.11 0-2 .9-2 2v14c0 1.1.89 2 2 2h14c1.11 0 2-.9 2-2V5c0-1.1-.89-2-2-2zm-9 14l-5-5 1.41-1.41L10 14.17l7.59-7.59L19 8l-9 9z"/></svg>
<svg class="ic" style="left:993.90px;top:537.41px;width:17.6px;height:17.6px;" viewBox="0 0 24 24"><path fill="#6b6b6b" d="M19 19H5V5h7V3H5c-1.11 0-2 .9-2 2v14c0 1.1.89 2 2 2h14c1.1 0 2-.9 2-2v-7h-2v7zM14 3v2h3.59l-9.83 9.83 1.41 1.41L19 6.41V10h2V3h-7z"/></svg>
<div class="row" style="top:560.54px;background:#ececec">
<span class="c ty" style="left:91.3px;top:5.46px">Organisa<i class=e>...</i></span>
<span class="c" style="left:164.4px;top:6.46px">0731391874</span>
<span class="c" style="left:311.2px;top:6.46px;letter-spacing:0.023px">craig@constructlaw.com.au</span>
<span class="c pl" style="left:609.3px;top:6.46px;letter-spacing:-0.25px">Level 1, Su</span>
<span class="c" style="left:657.9px;top:6.46px;letter-spacing:-0.084px">6-20 Blackwood Street, Mitchelton QLD, Australia</span>
</div>
<svg class="ic" style="left:144.00px;top:564.23px;width:17px;height:17px;" viewBox="0 0 24 24"><path fill="#616161" d="M7 10l5 5 5-5z"/></svg>
<svg class="ic" style="left:924.70px;top:564.48px;width:17px;height:17px;" viewBox="0 0 24 24"><path fill="#bdbdbd" d="M15.5 14h-.79l-.28-.27C15.41 12.59 16 11.11 16 9.5 16 5.91 13.09 3 9.5 3S3 5.91 3 9.5 5.91 16 9.5 16c1.61 0 3.09-.59 4.23-1.57l.27.28v.79l5 4.99L20.49 19l-4.99-5zm-6 0C7.01 14 5 11.99 5 9.5S7.01 5 9.5 5 14 7.01 14 9.5 11.99 14 9.5 14z"/></svg>
<svg class="ic" style="left:964.80px;top:564.07px;width:17.4px;height:17.4px;" viewBox="0 0 24 24"><path fill="#f3470f" d="M19 3H5c-1.11 0-2 .9-2 2v14c0 1.1.89 2 2 2h14c1.11 0 2-.9 2-2V5c0-1.1-.89-2-2-2zm-9 14l-5-5 1.41-1.41L10 14.17l7.59-7.59L19 8l-9 9z"/></svg>
<svg class="ic" style="left:993.90px;top:562.48px;width:17.6px;height:17.6px;" viewBox="0 0 24 24"><path fill="#6b6b6b" d="M19 19H5V5h7V3H5c-1.11 0-2 .9-2 2v14c0 1.1.89 2 2 2h14c1.1 0 2-.9 2-2v-7h-2v7zM14 3v2h3.59l-9.83 9.83 1.41 1.41L19 6.41V10h2V3h-7z"/></svg>
<div class="row" style="top:585.61px;background:#ffffff">
<span class="c ty" style="left:91.3px;top:5.39px">Organisa<i class=e>...</i></span>
</div>
<svg class="ic" style="left:144.00px;top:589.30px;width:17px;height:17px;" viewBox="0 0 24 24"><path fill="#616161" d="M7 10l5 5 5-5z"/></svg>
<svg class="ic" style="left:924.70px;top:589.55px;width:17px;height:17px;" viewBox="0 0 24 24"><path fill="#bdbdbd" d="M15.5 14h-.79l-.28-.27C15.41 12.59 16 11.11 16 9.5 16 5.91 13.09 3 9.5 3S3 5.91 3 9.5 5.91 16 9.5 16c1.61 0 3.09-.59 4.23-1.57l.27.28v.79l5 4.99L20.49 19l-4.99-5zm-6 0C7.01 14 5 11.99 5 9.5S7.01 5 9.5 5 14 7.01 14 9.5 11.99 14 9.5 14z"/></svg>
<svg class="ic" style="left:964.80px;top:589.14px;width:17.4px;height:17.4px;" viewBox="0 0 24 24"><path fill="#f3470f" d="M19 3H5c-1.11 0-2 .9-2 2v14c0 1.1.89 2 2 2h14c1.11 0 2-.9 2-2V5c0-1.1-.89-2-2-2zm-9 14l-5-5 1.41-1.41L10 14.17l7.59-7.59L19 8l-9 9z"/></svg>
<svg class="ic" style="left:993.90px;top:587.55px;width:17.6px;height:17.6px;" viewBox="0 0 24 24"><path fill="#6b6b6b" d="M19 19H5V5h7V3H5c-1.11 0-2 .9-2 2v14c0 1.1.89 2 2 2h14c1.1 0 2-.9 2-2v-7h-2v7zM14 3v2h3.59l-9.83 9.83 1.41 1.41L19 6.41V10h2V3h-7z"/></svg>
<div class="row" style="top:610.68px;background:#ececec">
<span class="c ty" style="left:91.3px;top:5.32px">Individual</span>
<span class="c" style="left:164.4px;top:6.32px">0736655699</span>
<span class="c" style="left:237.6px;top:6.32px">0433566977</span>
<span class="c" style="left:311.2px;top:6.32px;letter-spacing:-0.051px">DanielJFurrows@gmail.com</span>
<span class="c pl" style="left:609.3px;top:6.32px;letter-spacing:-0.154px">Unit 2</span>
<span class="c" style="left:657.9px;top:6.32px;letter-spacing:-0.178px">305 The Esplanade, Warners Bay NSW, Australia</span>
</div>
<svg class="ic" style="left:144.00px;top:614.37px;width:17px;height:17px;" viewBox="0 0 24 24"><path fill="#616161" d="M7 10l5 5 5-5z"/></svg>
<svg class="ic" style="left:924.70px;top:614.62px;width:17px;height:17px;" viewBox="0 0 24 24"><path fill="#bdbdbd" d="M15.5 14h-.79l-.28-.27C15.41 12.59 16 11.11 16 9.5 16 5.91 13.09 3 9.5 3S3 5.91 3 9.5 5.91 16 9.5 16c1.61 0 3.09-.59 4.23-1.57l.27.28v.79l5 4.99L20.49 19l-4.99-5zm-6 0C7.01 14 5 11.99 5 9.5S7.01 5 9.5 5 14 7.01 14 9.5 11.99 14 9.5 14z"/></svg>
<svg class="ic" style="left:964.80px;top:614.22px;width:17.4px;height:17.4px;" viewBox="0 0 24 24"><path fill="#f3470f" d="M19 3H5c-1.11 0-2 .9-2 2v14c0 1.1.89 2 2 2h14c1.11 0 2-.9 2-2V5c0-1.1-.89-2-2-2zm-9 14l-5-5 1.41-1.41L10 14.17l7.59-7.59L19 8l-9 9z"/></svg>
<svg class="ic" style="left:993.90px;top:612.62px;width:17.6px;height:17.6px;" viewBox="0 0 24 24"><path fill="#6b6b6b" d="M19 19H5V5h7V3H5c-1.11 0-2 .9-2 2v14c0 1.1.89 2 2 2h14c1.1 0 2-.9 2-2v-7h-2v7zM14 3v2h3.59l-9.83 9.83 1.41 1.41L19 6.41V10h2V3h-7z"/></svg>
<div class="hs" style="top:258.80px"></div>
<div class="hs" style="top:283.87px"></div>
<div class="hs" style="top:308.94px"></div>
<div class="hs" style="top:334.01px"></div>
<div class="hs" style="top:359.08px"></div>
<div class="hs" style="top:384.15px"></div>
<div class="hs" style="top:409.22px"></div>
<div class="hs" style="top:434.29px"></div>
<div class="hs" style="top:459.36px"></div>
<div class="hs" style="top:484.43px"></div>
<div class="hs" style="top:509.50px"></div>
<div class="hs" style="top:534.57px"></div>
<div class="hs" style="top:559.64px"></div>
<div class="hs" style="top:584.71px"></div>
<div class="hs" style="top:609.78px"></div>
<div class="hs" style="top:634.85px"></div>
<div class="vs" style="left:86.6px"></div>
<div class="vs" style="left:160.1px"></div>
<div class="vs" style="left:233.4px"></div>
<div class="vs" style="left:306.7px"></div>
<div class="vs" style="left:604.4px"></div>
<div class="vs" style="left:655.5px"></div>
<div class="vs" style="left:953.3px"></div>
<div class="vs" style="left:990.6px"></div>
<div class="vs" style="left:1013.7px"></div>
<!-- resize grips -->
<svg class="rz" style="left:79.5px" viewBox="0 0 7 7"><path d="M0.5 6.5L6.5 0.5M3.5 6.5L6.5 3.5" stroke="#8a8a8a" stroke-width="0.7" fill="none"/></svg>
<svg class="rz" style="left:597.5px" viewBox="0 0 7 7"><path d="M0.5 6.5L6.5 0.5M3.5 6.5L6.5 3.5" stroke="#8a8a8a" stroke-width="0.7" fill="none"/></svg>
<svg class="rz" style="left:946.5px" viewBox="0 0 7 7"><path d="M0.5 6.5L6.5 0.5M3.5 6.5L6.5 3.5" stroke="#8a8a8a" stroke-width="0.7" fill="none"/></svg>

<!-- ===== scrollbar ===== -->
<div class="abs" style="left:1015px;top:154px;width:12px;height:472px;background:#fff"></div>
<div id="sbup" class="abs"></div>
<div id="sbthumb" class="abs"></div>

<!-- ===== right app sidebar ===== -->
<div class="abs" style="left:1027px;top:118.8px;width:42px;height:508px;background:#fff"></div>
<div id="sline" class="abs"></div>
<div id="pct" class="abs">0%</div>
<!-- calendar outline -->
<svg class="ic" style="left:1040.6px;top:156.4px;width:15px;height:17px" viewBox="0 0 15 17"><rect x="1.100" y="2.600" width="12.800" height="13.200" rx="1.600" fill="none" stroke="#7db9ea" stroke-width="1.500"/><path d="M1.100 6.800H13.900" stroke="#7db9ea" stroke-width="1.400"/><path d="M4 .6V3M11 .6V3" stroke="#7db9ea" stroke-width="1.500"/></svg>
<!-- help -->
<svg class="ic" style="left:1039.4px;top:192.4px;width:17.400px;height:17.400px" viewBox="0 0 24 24"><path fill="#43a047" d="M12 2C6.480 2 2 6.480 2 12s4.480 10 10 10 10-4.480 10-10S17.520 2 12 2zm1 17h-2v-2h2v2zm2.070-7.750l-.9.92C13.450 12.900 13 13.500 13 15h-2v-.5c0-1.100.45-2.100 1.170-2.830l1.240-1.260c.37-.36.59-.86.59-1.410 0-1.100-.9-2-2-2s-2 .9-2 2H8c0-2.210 1.790-4 4-4s4 1.790 4 4c0 .88-.36 1.680-.93 2.250z"/></svg>
<!-- tag -->
<svg class="ic" style="left:1038.800px;top:226.600px;width:18.400px;height:18.400px" viewBox="0 0 24 24"><path fill="#8e24aa" d="M21.410 11.580l-9-9C12.050 2.220 11.550 2 11 2H4c-1.100 0-2 .9-2 2v7c0 .55.22 1.050.59 1.420l9 9c.36.36.86.58 1.410.58.55 0 1.050-.22 1.410-.59l7-7c.37-.36.59-.86.59-1.410 0-.55-.23-1.060-.59-1.420zM5.500 7C4.670 7 4 6.330 4 5.500S4.670 4 5.500 4 7 4.670 7 5.500 6.330 7 5.500 7z"/></svg>
<!-- subject lines -->
<svg class="ic" style="left:1041.800px;top:264.800px;width:13px;height:12px" viewBox="0 0 13 12"><path d="M0 1.300H12.600M0 4.400H12.600M0 7.500H12.600M0 10.500H8" stroke="#3a9bea" stroke-width="1.500"/></svg>
<!-- lime chat sparkle -->
<svg class="ic" style="left:1041.500px;top:298.600px;width:14px;height:15.400px" viewBox="0 0 14 15.400"><path fill="#c0ca33" d="M1.600 0h10.800C13.300 0 14 .7 14 1.600v9.800c0 .9-.7 1.600-1.600 1.600H9.200L7 15.200 4.800 13H1.600C.7 13 0 12.300 0 11.400V1.600C0 .7.700 0 1.600 0z"/><path fill="#fff" d="M7 2.600l1.100 2.900L11 6.600 8.100 7.700 7 10.600 5.900 7.700 3 6.600l2.900-1.100z"/></svg>
<!-- pink forum -->
<svg class="ic" style="left:1039.200px;top:331.400px;width:18px;height:18px" viewBox="0 0 24 24"><path fill="#e91e63" d="M21 6h-2v9H6v2c0 .55.45 1 1 1h11l4 4V7c0-.55-.45-1-1-1zm-4 6V3c0-.55-.45-1-1-1H3c-.55 0-1 .45-1 1v14l4-4h10c.55 0 1-.45 1-1z"/></svg>
<!-- history -->
<svg class="ic" style="left:1039.400px;top:366.800px;width:17.600px;height:17.600px" viewBox="0 0 24 24"><path fill="#df5548" d="M13 3c-4.970 0-9 4.030-9 9H1l3.890 3.890.07.14L9 12H6c0-3.870 3.130-7 7-7s7 3.130 7 7-3.130 7-7 7c-1.930 0-3.680-.79-4.940-2.060l-1.420 1.420C8.270 19.990 10.510 21 13 21c4.970 0 9-4.030 9-9s-4.030-9-9-9zm-1 5v5l4.280 2.540.72-1.210-3.500-2.080V8H12z"/></svg>
<!-- new releases burst -->
<svg class="ic" style="left:1039.600px;top:402.500px;width:17.200px;height:17.200px" viewBox="0 0 24 24"><path fill="#7cb342" d="M23 12l-2.440-2.780.34-3.680-3.610-.82-1.890-3.180L12 3 8.600 1.540 6.710 4.720l-3.610.81.34 3.680L1 12l2.440 2.780-.34 3.690 3.610.82 1.890 3.180L12 21l3.400 1.460 1.890-3.180 3.610-.82-.34-3.680L23 12zm-10 5h-2v-2h2v2zm0-4h-2V7h2v6z"/></svg>
<!-- event note -->
<svg class="ic" style="left:1039.800px;top:436.800px;width:17px;height:17px" viewBox="0 0 24 24"><path fill="#2bb5d3" d="M17 10H7v2h10v-2zm2-7h-1V1h-2v2H8V1H6v2H5c-1.110 0-1.990.9-1.990 2L3 19c0 1.100.89 2 2 2h14c1.100 0 2-.9 2-2V5c0-1.100-.9-2-2-2zm0 16H5V8h14v11zm-5-5H7v2h7v-2z"/></svg>
<!-- briefcase -->
<svg class="ic" style="left:1039.400px;top:472.200px;width:17.800px;height:17.800px" viewBox="0 0 24 24"><path fill="#fb8c00" d="M20 6h-4V4c0-1.110-.89-2-2-2h-4c-1.110 0-2 .89-2 2v2H4c-1.110 0-1.990.89-1.990 2L2 19c0 1.110.89 2 2 2h16c1.110 0 2-.89 2-2V8c0-1.110-.89-2-2-2zm-6 0h-4V4h4v2z"/></svg>
<!-- floating assistant pill -->
<div id="fpill" class="abs"></div>
<svg class="ic" style="left:1038.600px;top:517.400px;width:27px;height:27px" viewBox="-13.500 -13.500 27 27"><g fill="none" stroke="#0a0a0a" stroke-width="2.100"><ellipse rx="6.200" ry="12.500"/><ellipse rx="6.200" ry="12.500" transform="rotate(60)"/><ellipse rx="6.200" ry="12.500" transform="rotate(120)"/></g></svg>


<!-- ===== highlight + tooltip ===== -->
<div id="hl" class="abs"></div>
<div id="tip" class="abs"><span>Add new record</span></div>

<!-- ===== Windows taskbar ===== -->
<div id="task" class="abs"></div>
<div id="tchrome" class="abs"></div>
<div id="tteams" class="abs"></div>
<div class="ind" style="top:38.300px;height:30.200px"></div>
<div class="ind" style="top:114.900px;height:30.600px"></div>
<div class="ind" style="top:226.2px;height:37.200px;background:#8ec5f0"></div>
<div class="ind" style="top:264.500px;height:37px;background:#f28c28"></div>
<div class="ind" style="top:306.400px;height:30.600px"></div>
<div class="ind" style="top:344px;height:31.300px"></div>
<div class="ind" style="top:383px;height:30.600px"></div>
<div class="ind" style="top:420.500px;height:31.500px"></div>
<!-- windows logo -->
<svg class="ic" style="left:1087.200px;top:9px;width:13.800px;height:13.800px" viewBox="0 0 14 14"><path fill="#fff" d="M0 2l5.700-.8v5.500H0zM6.400 1.100L14 0v6.700H6.400zM0 7.400h5.700v5.500L0 12.100zM6.400 7.400H14V14l-7.600-1.100z"/></svg>
<!-- file explorer -->
<svg class="ic" style="left:1084.600px;top:45.800px;width:18.400px;height:15px" viewBox="0 0 18.400 15"><path fill="#e8a92e" d="M.6 0h5.600l1.500 1.600h10.100c.33 0 .6.270.6.600V3H0V.6C0 .27.270 0 .6 0z"/><rect y="2.600" width="18.400" height="12.400" rx=".7" fill="#f7cf52"/><rect x="3.800" y="8" width="10.800" height="7" fill="#3f8fd6"/><rect x="5.600" y="10.200" width="7.200" height="4.800" fill="#f7cf52"/><rect x="3.800" y="8" width="10.800" height="1.900" fill="#5aa7e6"/></svg>
<!-- copilot -->
<svg class="ic" style="left:1084.300px;top:83px;width:19px;height:18px" viewBox="0 0 19 18"><defs><linearGradient id="cpa" x1="0.200" y1="0" x2="0.500" y2="1"><stop offset="0" stop-color="#2f7bf0"/><stop offset=".45" stop-color="#35c16b"/><stop offset="1" stop-color="#f4c22e"/></linearGradient><linearGradient id="cpb" x1="0.600" y1="0" x2="0.300" y2="1"><stop offset="0" stop-color="#9a5cf0"/><stop offset=".5" stop-color="#e8539a"/><stop offset="1" stop-color="#f7743a"/></linearGradient></defs><path fill="url(#cpa)" d="M5.300.8h5.500c1.300 0 2 .9 1.700 2.100l-2.300 9.300c-.3 1.300-1.400 2.200-2.700 2.200H2.900c-1.700 0-2.600-1.400-2.100-3L3 3C3.300 1.700 4.100.8 5.300.8z"/><path fill="url(#cpb)" d="M11.400 3.400h4.800c1.700 0 2.500 1.400 2 3l-2.200 8.500c-.4 1.400-1.300 2.300-2.600 2.300H8.200c-1.300 0-2-.9-1.700-2.100l2.300-9.500c.3-1.300 1.300-2.200 2.600-2.200z"/><path fill="#3b6fe8" d="M8.800 1h2.400c1 0 1.600.7 1.300 1.700l-.7 2.600c-1.400-.1-2.600.7-3 2L8 10.500 6.600 6c-.5-1.700.3-4 2.200-5z" opacity=".75"/></svg>
<!-- vs code -->
<svg class="ic" style="left:1083.600px;top:120px;width:20.600px;height:20.600px" viewBox="0 0 20 20"><path fill="#2a8fdd" d="M14.400.6l4.200 2c.5.250.8.750.8 1.300v12.200c0 .55-.3 1.050-.8 1.300l-4.200 2L5.600 11 2.100 13.700.6 12.900V7.100l1.500-.8L5.600 9z"/><path fill="#1f2a38" d="M14.500 5.700L9 10l5.500 4.300z"/><path fill="#1b6fb8" d="M.6 7.100L3.800 10 .6 12.900z" opacity=".9"/></svg>
<!-- snipping tool -->
<svg class="ic" style="left:1083.600px;top:159.200px;width:21px;height:19.500px" viewBox="0 0 21 19.500"><ellipse cx="9.800" cy="8" rx="9" ry="5.700" fill="#b9343f" transform="rotate(-20 9.800 8)"/><ellipse cx="9.800" cy="7" rx="8.600" ry="5.200" fill="#f3ecee" transform="rotate(-20 9.800 7)"/><path d="M8.800 4.200l5.200 9M13.600 3.600l-3 8.600" stroke="#93a1ad" stroke-width="1.200" fill="none"/><circle cx="15.600" cy="15.600" r="2" fill="none" stroke="#2a86d8" stroke-width="1.500"/><circle cx="11.400" cy="15.800" r="2" fill="none" stroke="#2a86d8" stroke-width="1.500"/></svg>
<!-- google drive -->
<svg class="ic" style="left:1084.800px;top:197.800px;width:18.400px;height:17px" viewBox="0 0 18.400 17"><path fill="#21a464" d="M6.400.4h5.600L5.200 12.200 2.400 17 0 12.200z"/><path fill="#f9c32c" d="M6.400.4h5.600l6.400 11.200h-5.600z"/><path fill="#3b82f0" d="M2.400 17l2.800-5.400h13.200L15.600 17z"/><path fill="#117a3d" d="M6.400.4h5.600L9.200 5.300z" opacity=".55"/><path fill="#dd4b39" d="M12.800 11.600h5.600L15.600 17l-1.400-2.700z" opacity=".8"/><path fill="#1e55b0" d="M0 12.200L2.400 17l2.800-5.400z" opacity=".7"/></svg>
<!-- chrome -->
<svg class="ic" style="left:1084.200px;top:234.600px;width:20.600px;height:20.600px" viewBox="0 0 20 20"><circle cx="10" cy="10" r="10" fill="#fff"/><path fill="#e33b2e" d="M10 0a10 10 0 0 1 8.660 5H10a5 5 0 0 0-4.330 2.500L1.340 5A10 10 0 0 1 10 0z"/><path fill="#2da94f" d="M1.340 5l4.330 7.500A5 5 0 0 0 10 15l-3.300 4.440A10 10 0 0 1 1.340 5z"/><path fill="#fcc31e" d="M18.660 5A10 10 0 0 1 6.700 19.440L11 14.900A5 5 0 0 0 14.330 7.500L13.600 5z"/><circle cx="10" cy="10" r="4.500" fill="#fff"/><circle cx="10" cy="10" r="3.600" fill="#4a8af4"/></svg>
<svg class="ic" style="left:1091.600px;top:243.800px;width:13px;height:13px" viewBox="0 0 16 16"><defs><clipPath id="avc2"><circle cx="8" cy="8" r="8"/></clipPath></defs><g clip-path="url(#avc2)"><rect width="16" height="16" fill="#2e211d"/><ellipse cx="7.400" cy="8.400" rx="3.700" ry="4.400" fill="#d9a58c"/><path d="M2.500 9C2 3.500 5 1.200 8 1.400c3.400.2 5 3 4.300 7.200-.6-2.700-1.800-3.900-4.600-4.100C5.400 4.400 3.600 5.800 2.500 9z" fill="#231512"/><rect x="11.400" y="6.500" width="4.600" height="6" fill="#6a6d62"/><path d="M2 16c.5-3 2.500-4 5.500-4s5 1 5.500 4z" fill="#2c2522"/></g></svg>
<!-- teams -->
<svg class="ic" style="left:1081.600px;top:271px;width:24px;height:24px" viewBox="0 0 24 24"><circle cx="17.100" cy="7.300" r="2.600" fill="#8b93f0"/><circle cx="9.600" cy="5.100" r="3.400" fill="#8b93f0"/><path fill="#5962d2" d="M14 10.800h6.200c.7 0 1.200.5 1.200 1.200v4.200a3.600 3.600 0 0 1-7.200.6z"/><path fill="#7b83eb" d="M4.800 9.400h9.600c.7 0 1.200.5 1.200 1.200v5.800a5.300 5.300 0 0 1-10.600 0z"/><rect x="2.300" y="12.300" width="8.500" height="8" rx="1.300" fill="#4750c0"/><path fill="#fff" d="M8.700 14.600H7.100v4.300H6v-4.300H4.400v-1h4.300z"/></svg>
<svg class="ic" style="left:1092.400px;top:281.600px;width:12.800px;height:12.800px" viewBox="0 0 12 12"><circle cx="6" cy="6" r="6" fill="#d42a2a"/><text x="6" y="9.200" text-anchor="middle" font-family="Liberation Sans, sans-serif" font-size="8.600" fill="#fff">1</text></svg>
<!-- outlook -->
<svg class="ic" style="left:1083.800px;top:312.600px;width:20.400px;height:18.400px" viewBox="0 0 20.400 18.400"><rect x="6.200" y="0" width="14" height="13.600" rx="1.200" fill="#1a7fd6"/><rect x="10.400" y="1.200" width="4.800" height="4.400" fill="#35a5ee"/><rect x="15.200" y="1.200" width="5" height="4.400" fill="#5ec3f7"/><rect x="10.400" y="5.600" width="4.800" height="4.200" fill="#1768bd"/><rect x="15.200" y="5.600" width="5" height="4.200" fill="#2d95e3"/><path fill="#4bb4f2" d="M6.200 9.200l7.100 4.400 7.100-4.400v7.800c0 .8-.6 1.400-1.400 1.400H7.600c-.8 0-1.400-.6-1.400-1.400z"/><rect x="0" y="3.600" width="10" height="10" rx="1.200" fill="#0f64b8"/><ellipse cx="5" cy="8.600" rx="2.500" ry="2.900" fill="none" stroke="#fff" stroke-width="1.500"/></svg>
<!-- word -->
<svg class="ic" style="left:1084.200px;top:350.800px;width:18.400px;height:18.600px" viewBox="0 0 18.400 18.600"><rect x="4.200" y="0" width="14.200" height="18.600" rx="1.600" fill="#2a5fc0"/><rect x="4.200" y="0" width="14.200" height="4.800" rx="1.400" fill="#7fc0f5"/><rect x="4.200" y="4.600" width="14.200" height="4.800" fill="#4a97e8"/><rect x="4.200" y="9.300" width="14.200" height="4.700" fill="#2f74d6"/><rect x="0" y="5" width="9.800" height="9.800" rx="1.200" fill="#1b4fae"/><path d="M1.900 7.600l1.300 4.800L4.900 8l1.700 4.400 1.300-4.800" stroke="#fff" stroke-width="1.150" fill="none" stroke-linejoin="round"/></svg>
<!-- powershell -->
<svg class="ic" style="left:1083.800px;top:389.600px;width:20.800px;height:16.200px" viewBox="0 0 20.800 16.200"><path fill="#3f72d0" d="M4.400 0h15.400c.7 0 1.100.5.9 1.200l-3.600 13.800c-.2.700-.8 1.200-1.500 1.200H1c-.7 0-1.100-.5-.9-1.200L3.700 1.200C3.900.5 4.200 0 4.400 0z"/><path d="M6.200 3.800l5 4.200-6.600 4.400" stroke="#fff" stroke-width="1.700" fill="none" stroke-linejoin="round" stroke-linecap="round"/><path d="M10.600 12.400h4.400" stroke="#fff" stroke-width="1.600" stroke-linecap="round"/></svg>
<!-- excel -->
<svg class="ic" style="left:1083.200px;top:427px;width:18.800px;height:18.400px" viewBox="0 0 18.800 18.400"><rect x="4.400" y="0" width="14.400" height="18.400" rx="1.600" fill="#1f8a48"/><rect x="4.400" y="0" width="7.200" height="6.200" fill="#2fa35c"/><rect x="11.600" y="0" width="7.200" height="6.200" rx="1.200" fill="#5fcf7a"/><rect x="4.400" y="6.200" width="7.200" height="6.100" fill="#187a3e"/><rect x="11.600" y="6.200" width="7.200" height="6.100" fill="#2fa35c"/><rect x="4.400" y="12.300" width="14.400" height="6.100" rx="1.400" fill="#146a36"/><rect x="0" y="5.200" width="9.800" height="9.800" rx="1.200" fill="#0f6a34"/><path d="M2.800 7.600l4.200 5M7 7.600l-4.200 5" stroke="#fff" stroke-width="1.300"/></svg>

</body>
</html>
